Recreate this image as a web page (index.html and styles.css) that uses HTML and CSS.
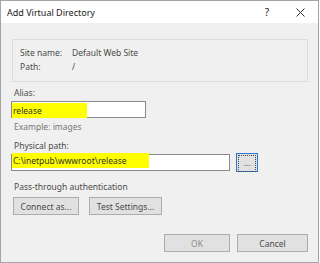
FILE: index.html
```html
<!DOCTYPE html>
<html lang="en">
<head>
    <meta charset="UTF-8">
    <title>Add Virtual Directory</title>
    <link rel="stylesheet" href="styles.css">
</head>
<body>
    <div class="window">
        <div class="titlebar">
            <span class="title">Add Virtual Directory</span>
            <span class="help">?</span>
            <svg class="close" width="9" height="9" viewBox="0 0 9 9">
                <path d="M0.5 0.5 L8.5 8.5 M8.5 0.5 L0.5 8.5" stroke="#333" stroke-width="1" fill="none"/>
            </svg>
        </div>
        <div class="content">
            <div class="site-box">
                <div class="info-row"><span class="info-key">Site name:</span><span>Default Web Site</span></div>
                <div class="info-row"><span class="info-key">Path:</span><span>/</span></div>
            </div>

            <div class="label alias-label">Alias:</div>
            <div class="textbox alias-box"><span class="marker marker-alias">release</span></div>
            <div class="hint">Example: images</div>

            <div class="label path-label">Physical path:</div>
            <div class="path-row">
                <div class="textbox path-box"><span class="marker marker-path">C:\inetpub\wwwroot\release</span></div>
                <button class="btn browse"><span class="focus">...</span></button>
            </div>

            <div class="label auth-label">Pass-through authentication</div>
            <div class="auth-row">
                <button class="btn connect">Connect as...</button>
                <button class="btn test">Test Settings...</button>
            </div>

            <div class="footer">
                <button class="btn ok">OK</button>
                <button class="btn cancel">Cancel</button>
            </div>
        </div>
    </div>
</body>
</html>
```

FILE: styles.css
```css
body {
    margin: 0;
    background-color: #fff;
    font-family: "Noto Sans", "Open Sans", sans-serif;
    font-size: 8.5px;
    color: #4a4a4a;
}

.window {
    width: 317px;
    height: 261px;
    border: 1px solid #a5a5a5;
    background-color: #f0f0f0;
    display: flex;
    flex-direction: column;
}

.titlebar {
    height: 22px;
    background-color: #fff;
    display: flex;
    align-items: center;
    padding-left: 6px;
    flex-shrink: 0;
}

.title {
    color: #222;
    font-size: 9px;
    flex: 1;
}

.help {
    color: #222;
    font-size: 10px;
    margin-right: 27px;
}

.close {
    margin-right: 13px;
}

.content {
    padding: 16px 10px 0 10px;
    display: flex;
    flex-direction: column;
}

.site-box {
    height: 28px;
    border: 1px solid #dcdcdc;
    padding: 6px 7px 7px 7px;
    margin-left: 1px;
}

.info-row {
    display: flex;
    line-height: 14px;
}

.info-key {
    width: 52px;
}

.label {
    line-height: 14px;
    padding-left: 3px;
}

.alias-label {
    margin-top: 4px;
}

.textbox {
    height: 15px;
    border: 1px solid #8a8a8a;
    background-color: #fff;
    display: flex;
    align-items: center;
    color: #333;
}

.alias-box {
    width: 133px;
    margin-top: 1px;
}

.marker {
    background-color: #ffff00;
    padding: 2px 6px 2px 1px;
    position: relative;
}

.marker-alias {
    padding-right: 45px;
    top: 1px;
}

.marker-path {
    padding-right: 22px;
    top: -2px;
}

.hint {
    color: #777;
    line-height: 14px;
    margin-top: 2px;
    padding-left: 3px;
}

.path-label {
    margin-top: 5px;
}

.path-row {
    display: flex;
    align-items: center;
    gap: 6px;
}

.path-box {
    width: 217px;
}

.btn {
    font-family: inherit;
    font-size: 8.5px;
    color: #4a4a4a;
    background-color: #e1e1e1;
    border: 1px solid #adadad;
    padding: 0;
    height: 18px;
}

.browse {
    width: 22px;
    height: 19px;
    border-color: #2a78d6;
    padding: 1px;
}

.focus {
    display: block;
    height: 15px;
    border: 1px dotted #444;
    line-height: 13px;
    color: #555;
}

.auth-label {
    margin-top: 8px;
}

.auth-row {
    display: flex;
    gap: 10px;
    margin-top: 3px;
    margin-left: 2px;
}

.connect {
    width: 66px;
}

.test {
    width: 73px;
}

.footer {
    display: flex;
    justify-content: flex-end;
    gap: 7px;
    margin-top: 19px;
}

.ok {
    width: 66px;
    color: #8a8a8a;
}

.cancel {
    width: 71px;
}
```
